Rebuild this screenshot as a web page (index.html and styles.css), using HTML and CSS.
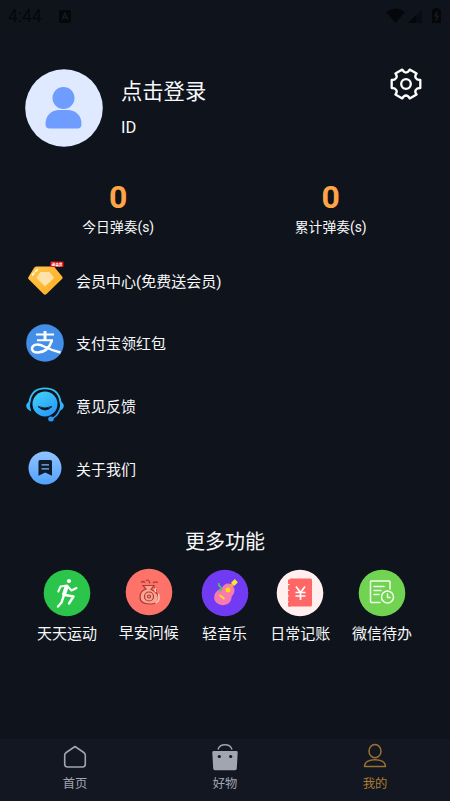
FILE: index.html
```
<!DOCTYPE html>
<html lang="zh-CN">
<head>
<meta charset="utf-8">
<title>我的</title>
<link rel="stylesheet" href="styles.css">
</head>
<body>
<div class="screen">
  <header class="status">
    <span class="clock">4:44</span>
    <svg class="status-app" width="12" height="13" viewBox="0 0 12 13"><rect width="12" height="13" rx="1.5" fill="#05070b"/><path d="M3 9.500 6 3l3 6.500M4.200 7.500h3.600" fill="none" stroke="#171b22" stroke-width="1.300"/></svg>
    <svg class="status-signals" width="56" height="18" viewBox="0 0 56 18">
      <path d="M0 5Q9.500-2 19 5L9.500 16Z" fill="#05070b"/>
      <path d="M22 16 36 3v13Z" fill="#090d13"/><path d="M22 16 30 8.500V16Z" fill="#04060a"/>
      <path d="M46 2.500h2V1h5v1.500h2V16h-9Z" fill="#05070b"/><path d="M51.500 4.500 49 9h3l-2 4.500" fill="none" stroke="#1c2027" stroke-width="1.200"/>
    </svg>
  </header>

  <section class="profile">
    <svg class="avatar" width="78" height="78" viewBox="0 0 78 78"><circle cx="39" cy="39" r="38.800" fill="#dfe9ff"/><circle cx="38.500" cy="29" r="11" fill="#6e9cff"/><path d="M20.500 55C20.500 46 27 41 34 41h9c7 0 13.500 5 13.500 14 0 3-1.500 4.500-4 4.500h-28c-2.500 0-4-1.500-4-4.500Z" fill="#6e9cff"/></svg>
    <div class="identity">
      <div class="login">点击登录</div>
      <div class="uid">ID</div>
    </div>
    <svg class="gear" width="34" height="34" viewBox="-17 -17 34 34" fill="none" stroke="#fff" stroke-width="2.300" stroke-linejoin="round"><path d="M14.300 4C9.800 3.800 7.800 7.300 10.600 10.400L3.700 14.400C1.700 10.500-1.700 10.500-3.700 14.400L-10.600 10.400C-7.800 7.300-9.800 3.800-14.300 4L-14.300-4C-9.800-3.800-7.800-7.300-10.600-10.400L-3.700-14.400C-1.700-10.500 1.700-10.500 3.700-14.400L10.600-10.400C7.800-7.300 9.800-3.800 14.300-4Z"/><circle r="4.800"/></svg>
  </section>

  <section class="stats">
    <div class="stat"><div class="stat-value">0</div><div class="stat-label">今日弹奏(s)</div></div>
    <div class="stat"><div class="stat-value">0</div><div class="stat-label">累计弹奏(s)</div></div>
  </section>

  <nav class="menu">
    <div class="menu-row">
      <svg width="40" height="40" viewBox="0 0 40 40"><defs><linearGradient id="gold" x2="1" y2="1"><stop stop-color="#ffc64a"/><stop offset="1" stop-color="#ffac20"/></linearGradient></defs><path d="M11 6.500h18L37.500 17Q38 18 37 19L21.500 34Q20 35.500 18.500 34L3.500 19Q2.500 18 3.500 17L9 8Q10 6.500 11 6.500Z" fill="url(#gold)"/><path d="M15.500 12h9l4.500 6-9 8.500L11.500 18Z" fill="#ffe2a8"/><path d="M7.500 15 9 13M10.500 11.500 12.500 9.500" stroke="#fff" stroke-width="1.500" stroke-linecap="round"/><rect x="25.500" y="1.500" width="13" height="5.500" rx="1" fill="#ed1018"/><text class="tiny" x="32" y="5.700" text-anchor="middle">送会员</text></svg>
      <span>会员中心(免费送会员)</span>
    </div>
    <div class="menu-row">
      <svg width="40" height="40" viewBox="0 0 40 40"><circle cx="20" cy="20" r="18.800" fill="#428ee9"/><g fill="none" stroke="#fff"><path d="M11 11.500h18M12 17.300h16" stroke-width="2"/><path d="M20 8v9" stroke-width="3"/><path d="M27 17.500C25 23 20.500 29.500 13 29.500 8.500 29.500 6.500 27.500 7 25 8 20.500 14.500 21 19 23.500 24 26 29 28 35.500 29.500" stroke-width="2.500"/></g></svg>
      <span>支付宝领红包</span>
    </div>
    <div class="menu-row">
      <svg width="40" height="40" viewBox="0 0 40 40"><defs><linearGradient id="aqua" x1="0" x2=".7" y2="1"><stop stop-color="#43d5fb"/><stop offset="1" stop-color="#2998f8"/></linearGradient></defs><circle cx="20" cy="19" r="12.500" fill="url(#aqua)"/><path d="M13 21.500Q20 28.500 27 21.500Q20 24.500 13 21.500Z" fill="#0f141c" stroke="#0f141c" stroke-width=".8"/><path d="M4.500 17C6 7 12.500 3.300 20 3.300S34 7 35.500 17" fill="none" stroke="#35bff8" stroke-width="1.800"/><path d="M5.500 15.500Q1 18 1.200 21t5 5.500Q4 21 5.500 15.500ZM34.500 15.500Q39 18 38.800 21t-5 5.500Q36 21 34.500 15.500Z" fill="#31b5f8"/><path d="M34.500 25Q32 32 26.500 33.500" fill="none" stroke="#2b9af5" stroke-width="1.700"/><ellipse cx="26" cy="34" rx="2.800" ry="2.500" fill="#2b9af5"/></svg>
      <span>意见反馈</span>
    </div>
    <div class="menu-row">
      <svg width="40" height="40" viewBox="0 0 40 40"><defs><linearGradient id="sky" x2="0" y2="1"><stop stop-color="#91c4ff"/><stop offset="1" stop-color="#53a2fe"/></linearGradient></defs><circle cx="20" cy="20" r="16.500" fill="url(#sky)"/><path d="M13.500 13.500Q13.500 12 15 12h10.500Q27 12 27 13.500V27.700l-6.800-3.200-6.700 3.200Z" fill="#0f1a2b"/><path d="M16.500 16.800h7.500M16.500 20.800h7.500" stroke="#80b9fc" stroke-width="1.200"/></svg>
      <span>关于我们</span>
    </div>
  </nav>

  <h2 class="more-title">更多功能</h2>
  <section class="tools">
    <div class="tool">
      <svg width="48" height="48" viewBox="0 0 48 48"><circle cx="24" cy="24" r="23.300" fill="#2ac54a"/><circle cx="26" cy="12" r="2.100" fill="#fff"/><g fill="none" stroke="#fff" stroke-linecap="round" stroke-linejoin="round"><path d="M15.300 22.500 17.500 17.500 24 16.500 28.500 21.500 33.500 19" stroke-width="2"/><path d="M23.500 18 21 25.500" stroke-width="4"/><path d="M22 26 30.500 27.500 26 34.500M20.500 27.500 18.500 33.500 15 37.500" stroke-width="2.400"/></g></svg>
      <span>天天运动</span>
    </div>
    <div class="tool tool-raised">
      <svg width="48" height="48" viewBox="0 0 48 48"><circle cx="24" cy="24" r="23.300" fill="#fd7369"/><g fill="none" stroke="#ad3a35" stroke-width="1.200"><path d="M18 17.500h11l-3 4c5 2 8 6 7.500 9-.5 4-3 5.500-8.500 5.500-7 0-10-2-10-7 0-4 3-7 6-8Z" fill="#fba391"/><circle cx="24" cy="28.500" r="4.500"/><circle cx="24" cy="28.500" r="1.500"/><path d="M16 14.500q2-2 4 0M21 13q1.500-2 3 0t0 2M28 15q2-2 5-.500M29 19q3 2 2 6"/></g><path d="M31 20q-2 2 0 4M33.500 26q2 7-3 9" fill="none" stroke="#ffd0b7" stroke-width="1.500"/></svg>
      <span>早安问候</span>
    </div>
    <div class="tool">
      <svg width="48" height="48" viewBox="0 0 48 48"><circle cx="24" cy="24" r="23.300" fill="#713bf3"/><path d="M21 19C23 14 29 13 32 17c3 4 1 8-1 10-1 2 0 4-3 7-5 4-12 2-14.500-3C12 25 16 21 21 19Z" fill="#f87ab0"/><path d="M29 18 34 13" stroke="#f5a04a" stroke-width="3"/><rect x="-2.600" y="-2.200" width="5.200" height="4.400" transform="translate(33.500 13.500) rotate(-45)" fill="#f9e72a"/><circle cx="27" cy="21" r="2.500" fill="#ffdb16"/><path d="m18.500 26 5 4" stroke="#ffe51e" stroke-width="1.800"/><path d="M18 22q4-1 2-3.500-3-2-2-4.500" fill="none" stroke="#50bd72" stroke-width="1.800"/></svg>
      <span>轻音乐</span>
    </div>
    <div class="tool">
      <svg width="48" height="48" viewBox="0 0 48 48"><circle cx="24" cy="24" r="23.300" fill="#fff0ef"/><path d="M14 9.500h20.500Q36 9.500 36 11v25q0 1.500-1.500 1.500H14Q12.500 37.500 12.500 36Z" fill="#ff6666"/><path d="M13.500 10.500v27" stroke="#ff6666" stroke-width="3" stroke-dasharray="4.500 1.200"/><path d="m20 17.500 4.500 6 4.500-6M24.500 23.500v7.500M19.500 23.500h10M19.500 27h10" fill="none" stroke="#fff" stroke-width="1.700"/></svg>
      <span>日常记账</span>
    </div>
    <div class="tool">
      <svg width="48" height="48" viewBox="0 0 48 48"><circle cx="24" cy="24" r="23.300" fill="#71d352"/><g fill="none" stroke="#f2ffee" stroke-width="1.500" stroke-linecap="round" stroke-linejoin="round"><path d="M32 20v-7Q32 12 31 12H13.500Q12.500 12 12.500 13v19.500Q12.500 33.500 13.500 33.500H22M16 17.500h10M16 21.500h7M16 25.500h5"/><circle cx="29.500" cy="28" r="6"/><path d="M29.500 25v3.500H32"/></g></svg>
      <span>微信待办</span>
    </div>
  </section>

  <footer class="tabs">
    <div class="tab">
      <svg width="30" height="30" viewBox="0 0 30 30"><path d="M4.700 12.200Q4.700 10.500 6.200 9.500L15 3.500l8.800 6q1.500 1 1.500 2.700V21Q25.300 24 22.500 24h-15Q4.700 24 4.700 21Z" fill="none" stroke="#a2a5b0" stroke-width="1.600" stroke-linejoin="round"/></svg>
      <span>首页</span>
    </div>
    <div class="tab">
      <svg width="30" height="30" viewBox="0 0 30 30"><path d="M8 6.500C10 .3 20 .3 22 6.500" fill="none" stroke="#a2a5b0" stroke-width="1.500"/><path d="M3.800 8h22.400Q27.800 8 27.700 9.500l-.9 16q-.1 1.700-1.800 1.700H5q-1.700 0-1.800-1.700l-.9-16Q2.200 8 3.800 8Z" fill="#a2a5b0"/><circle cx="9.300" cy="13.500" r="1.600" fill="#121620"/><circle cx="20.700" cy="13.500" r="1.600" fill="#121620"/></svg>
      <span>好物</span>
    </div>
    <div class="tab tab-active">
      <svg width="30" height="30" viewBox="0 0 30 30"><g fill="none" stroke="#9a7133" stroke-width="1.500"><ellipse cx="15" cy="8.200" rx="6" ry="6.600"/><path d="M4.500 23.500C4.500 19 9 16.700 15 16.700S25.500 19 25.500 23.500Z" stroke-linejoin="round"/></g></svg>
      <span>我的</span>
    </div>
  </footer>
</div>
</body>
</html>
```
FILE: styles.css
```
* { box-sizing: border-box; }
body {
  margin: 0;
  background: #0f141c;
  color: #f7f8f9;
  font-family: Roboto, "Noto Sans CJK SC", sans-serif;
}
svg { display: block; flex: none; }
.screen {
  width: 450px;
  height: 801px;
  display: flex;
  flex-direction: column;
  overflow: hidden;
}
.status {
  height: 32px;
  padding: 0 8px;
  display: flex;
  align-items: center;
  color: #05070b;
  font-size: 17.5px;
}
.clock { width: 51px; }
.status-signals { margin-left: auto; }
.profile {
  height: 116px;
  padding: 36.500px 27px 0 25px;
  display: flex;
  align-items: flex-start;
}
.identity { margin-left: 18px; padding-top: 9.500px; }
.login { font-size: 21.3px; line-height: 28px; }
.uid { margin-top: 12px; font-size: 16.500px; line-height: 20px; }
.gear { margin: -1.500px 0 0 auto; }
.stats {
  height: 101px;
  padding: 31px 13px 0 12px;
  display: grid;
  grid-template-columns: 1fr 1fr;
  text-align: center;
}
.stat-value { color: #ffa447; font-size: 32px; font-weight: 700; line-height: 36px; }
.stat-label { margin-top: 2px; font-size: 13.800px; line-height: 20px; }
.menu { height: 251px; display: grid; grid-template-rows: repeat(4, 62.600px); }
.menu-row {
  padding-left: 25px;
  display: flex;
  align-items: center;
  gap: 11px;
  font-size: 15px;
}
.tiny { font-size: 3.700px; font-weight: 900; fill: #fff; }
.more-title {
  margin: 27px 0 0;
  font-size: 20px;
  font-weight: 400;
  line-height: 30px;
  text-align: center;
}
.tools { padding: 12px 38px 0 37px; display: flex; justify-content: space-between; }
.tool {
  display: flex;
  flex-direction: column;
  align-items: center;
  gap: 7px;
  font-size: 15px;
  line-height: 20px;
  white-space: nowrap;
}
.tool-raised { margin-top: -1px; }
.tabs {
  height: 62px;
  margin-top: auto;
  display: grid;
  grid-template-columns: repeat(3, 1fr);
  background: #131722;
  color: #a2a5b0;
}
.tab {
  padding-top: 4px;
  display: flex;
  flex-direction: column;
  align-items: center;
  gap: 3px;
  font-size: 12.300px;
  line-height: 16px;
}
.tab-active { color: #ad7c31; }
```
